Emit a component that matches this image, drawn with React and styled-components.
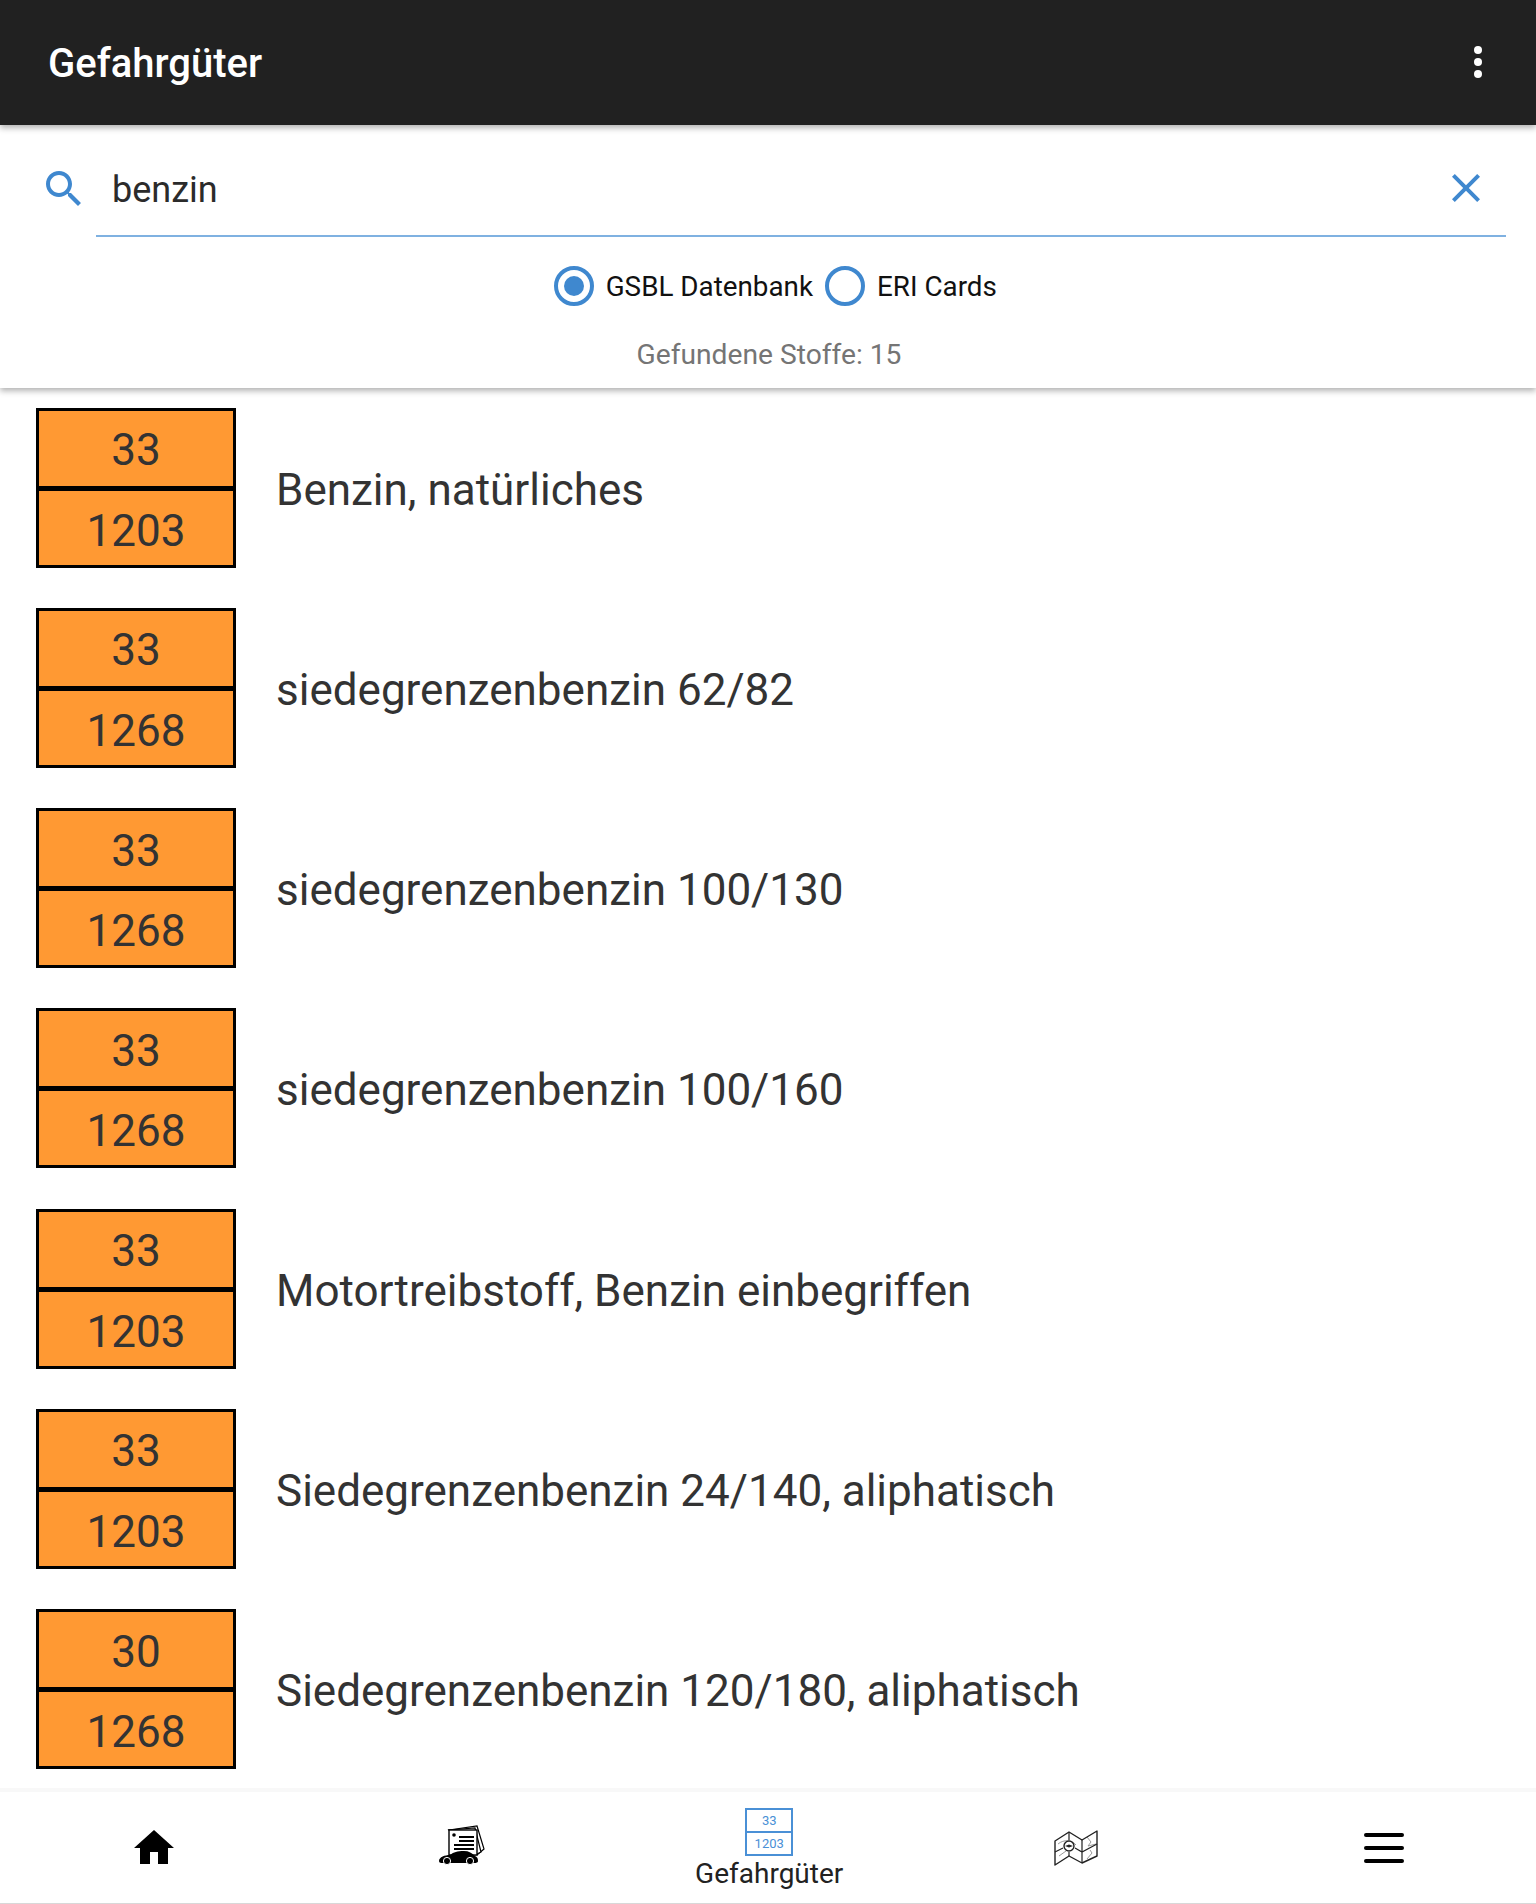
import styled, { createGlobalStyle } from "styled-components";

const GlobalStyle = createGlobalStyle`
  html, body {
    margin: 0;
    padding: 0;
    background: #fff;
    font-family: "Roboto", "Liberation Sans", sans-serif;
  }
`;

const Page = styled.div`
  width: 1536px;
  height: 1904px;
  display: flex;
  flex-direction: column;
  overflow: hidden;
  background: #fff;
`;

const Header = styled.header`
  height: 125px;
  flex: none;
  display: flex;
  align-items: center;
  justify-content: space-between;
  padding: 0 54px 0 48px;
  background: #212121;
  box-shadow: 0 3px 6px rgba(0, 0, 0, 0.3);
  position: relative;
  z-index: 3;
`;

const Title = styled.h1`
  margin: 0;
  padding-top: 2px;
  font-size: 40px;
  font-weight: 500;
  color: #fff;
`;

const MenuDots = styled.div`
  display: flex;
  flex-direction: column;
  gap: 4px;
  margin-bottom: 2px;
`;

const Dot = styled.span`
  width: 8px;
  height: 8px;
  border-radius: 50%;
  background: #fff;
`;

const SearchPanel = styled.section`
  flex: none;
  height: 263px;
  box-sizing: border-box;
  padding-top: 39px;
  background: #fff;
  box-shadow: 0 3px 6px rgba(0, 0, 0, 0.3);
  position: relative;
  z-index: 2;
`;

const SearchRow = styled.div`
  display: flex;
  align-items: flex-start;
  padding: 0 30px 0 40px;
`;

const SearchIcon = styled.svg`
  width: 48px;
  height: 48px;
  flex: none;
  margin: 1px 8px 0 0;
  fill: #3f88cf;
`;

const Field = styled.div`
  flex: 1;
  display: flex;
  align-items: center;
  justify-content: space-between;
  height: 48px;
  padding: 0 16px 23px 16px;
  border-bottom: 2px solid #7fb1e1;
`;

const Query = styled.span`
  padding-top: 4px;
  font-size: 36px;
  color: #2b2b2b;
`;

const ClearIcon = styled.svg`
  width: 48px;
  height: 48px;
  fill: #3f88cf;
`;

const RadioRow = styled.div`
  display: flex;
  justify-content: center;
  align-items: center;
  gap: 12px;
  margin-top: 29px;
  padding-left: 14.5px;
`;

const RadioOption = styled.label`
  display: flex;
  align-items: center;
  gap: 12px;
  font-size: 27.8px;
  color: #111;
`;

const RadioCircle = styled.span`
  width: 40px;
  height: 40px;
  box-sizing: border-box;
  border: 4px solid #3f88cf;
  border-radius: 50%;
  display: flex;
  align-items: center;
  justify-content: center;

  &::after {
    content: "";
    width: 20px;
    height: 20px;
    border-radius: 50%;
    background: ${(props) => (props.$checked ? "#3f88cf" : "transparent")};
  }
`;

const Count = styled.div`
  margin-top: 29px;
  padding-left: 2px;
  line-height: 40px;
  text-align: center;
  font-size: 28.2px;
  color: #757575;
`;

const List = styled.main`
  flex: 1;
  min-height: 0;
  overflow: hidden;
  padding-top: 19.5px;
`;

const Row = styled.div`
  display: flex;
  align-items: center;
  height: 160px;
  margin-bottom: 40.3px;
  padding-left: 36px;
`;

const Plate = styled.div`
  width: 200px;
  height: 160px;
  box-sizing: border-box;
  flex: none;
  display: flex;
  flex-direction: column;
  border: 3px solid #000;
  background: #ff9933;
`;

const PlateCell = styled.div`
  height: 75px;
  box-sizing: border-box;
  display: flex;
  align-items: center;
  justify-content: center;
  padding-top: 4px;
  font-size: 44px;
  color: #333;

  & + & {
    height: 79px;
    padding-top: 6px;
    border-top: 5px solid #000;
  }
`;

const ItemName = styled.div`
  margin-left: 40px;
  padding-top: 4px;
  font-size: 44px;
  color: #333;
`;

const BottomNav = styled.nav`
  flex: none;
  height: 112px;
  box-sizing: border-box;
  display: grid;
  grid-template-columns: repeat(4, 307.7px) 1fr;
  background: #fff;
  border-bottom: 1px solid #d8d8d8;
  box-shadow: 0 -4px 0 #f8f8f8;
  position: relative;
  z-index: 2;
`;

const NavItem = styled.div`
  display: flex;
  flex-direction: column;
  align-items: center;
  justify-content: center;
`;

const ActiveItem = styled(NavItem)`
  justify-content: flex-start;
  padding-top: 16px;
`;

const MiniPlate = styled.div`
  width: 48px;
  height: 48px;
  box-sizing: border-box;
  display: flex;
  flex-direction: column;
  border: 2px solid #4a90d6;
`;

const MiniCell = styled.div`
  flex: 1;
  display: flex;
  align-items: center;
  justify-content: center;
  font-size: 13px;
  color: #4a90d6;

  & + & {
    border-top: 2px solid #4a90d6;
  }
`;

const NavLabel = styled.div`
  margin-top: 2px;
  font-size: 28px;
  line-height: 32px;
  color: #222;
`;

const HomeIcon = styled.svg`
  width: 48px;
  height: 48px;
  fill: #000;
`;

const DocsIcon = styled.svg`
  width: 46px;
  height: 40px;
  margin-top: -6px;
`;

const MapIcon = styled.svg`
  width: 44px;
  height: 36px;
  margin-right: 2px;
`;

const BurgerIcon = styled.div`
  width: 40px;
  margin-left: 2px;
  display: flex;
  flex-direction: column;
  gap: 9px;
`;

const BurgerLine = styled.span`
  height: 4px;
  border-radius: 2px;
  background: #000;
`;

const items = [
  { top: "33", bottom: "1203", name: "Benzin, natürliches" },
  { top: "33", bottom: "1268", name: "siedegrenzenbenzin 62/82" },
  { top: "33", bottom: "1268", name: "siedegrenzenbenzin 100/130" },
  { top: "33", bottom: "1268", name: "siedegrenzenbenzin 100/160" },
  { top: "33", bottom: "1203", name: "Motortreibstoff, Benzin einbegriffen" },
  { top: "33", bottom: "1203", name: "Siedegrenzenbenzin 24/140, aliphatisch" },
  { top: "30", bottom: "1268", name: "Siedegrenzenbenzin 120/180, aliphatisch" },
];

export default function App() {
  return (
    <Page>
      <GlobalStyle />
      <Header>
        <Title>Gefahrgüter</Title>
        <MenuDots>
          <Dot />
          <Dot />
          <Dot />
        </MenuDots>
      </Header>

      <SearchPanel>
        <SearchRow>
          <SearchIcon viewBox="0 0 24 24">
            <path d="M15.5 14h-.79l-.28-.27C15.41 12.59 16 11.11 16 9.5 16 5.91 13.09 3 9.5 3S3 5.91 3 9.5 5.91 16 9.5 16c1.61 0 3.09-.59 4.23-1.57l.27.28v.79l5 4.99L20.49 19l-4.99-5zm-6 0C7.01 14 5 11.99 5 9.5S7.01 5 9.5 5 14 7.01 14 9.5 11.99 14 9.5 14z" />
          </SearchIcon>
          <Field>
            <Query>benzin</Query>
            <ClearIcon viewBox="0 0 24 24">
              <path d="M19 6.41L17.59 5 12 10.59 6.41 5 5 6.41 10.59 12 5 17.59 6.41 19 12 13.41 17.59 19 19 17.59 13.41 12z" />
            </ClearIcon>
          </Field>
        </SearchRow>
        <RadioRow>
          <RadioOption>
            <RadioCircle $checked />
            GSBL Datenbank
          </RadioOption>
          <RadioOption>
            <RadioCircle />
            ERI Cards
          </RadioOption>
        </RadioRow>
        <Count>Gefundene Stoffe: 15</Count>
      </SearchPanel>

      <List>
        {items.map((item) => (
          <Row key={item.name}>
            <Plate>
              <PlateCell>{item.top}</PlateCell>
              <PlateCell>{item.bottom}</PlateCell>
            </Plate>
            <ItemName>{item.name}</ItemName>
          </Row>
        ))}
      </List>

      <BottomNav>
        <NavItem>
          <HomeIcon viewBox="0 0 24 24">
            <path d="M10 20v-6h4v6h5v-8h3L12 3 2 12h3v8z" />
          </HomeIcon>
        </NavItem>
        <NavItem>
          <DocsIcon viewBox="0 0 46 40">
            <path d="M10 5 L38 1 L45 24 L38 30 Z" fill="#fff" stroke="#000" strokeWidth="1.2" />
            <path d="M10 5 L36 3 L42 27 L36 30 Z" fill="#fff" stroke="#000" strokeWidth="1.2" />
            <rect x="10" y="5" width="28" height="25" fill="#fff" stroke="#000" strokeWidth="1.4" />
            <circle cx="15" cy="10" r="1.8" fill="#000" />
            <path d="M20 12 H35 M20 16 H35 M15 20 H35 M15 24 H35" stroke="#000" strokeWidth="1.8" />
            <path d="M0 36 C0 32 6 30 11 30 C15 27 18 26 25 26 C30 26 33 28 36 31 C38 32 39 33 39 36 C39 38 36 38 35 38 L4 38 C2 38 0 38 0 36 Z" fill="#000" />
            <circle cx="8" cy="36" r="3.6" fill="#000" stroke="#fff" strokeWidth="1" />
            <circle cx="31" cy="36" r="3.6" fill="#000" stroke="#fff" strokeWidth="1" />
          </DocsIcon>
        </NavItem>
        <ActiveItem>
          <MiniPlate>
            <MiniCell>33</MiniCell>
            <MiniCell>1203</MiniCell>
          </MiniPlate>
          <NavLabel>Gefahrgüter</NavLabel>
        </ActiveItem>
        <NavItem>
          <MapIcon viewBox="0 0 44 36">
            <path d="M4 14 C10 9 18 10 22 15 M5 26 L12 21 M33 7 L37 12 L34 16 L42 14 M33 29 L38 23 L36 20" fill="none" stroke="#999" strokeWidth="1" />
            <path d="M1 11 L15 2 L28 10 L43 1 L43 26 L28 33 L15 26 L1 35 Z" fill="none" stroke="#222" strokeWidth="1.4" strokeLinejoin="round" />
            <path d="M28 10 V33 M15 2 V10 M15 22 V26 M1 22 L9 18 M21 18 L28 22 L43 14" fill="none" stroke="#222" strokeWidth="1.2" />
            <circle cx="15" cy="16" r="5" fill="#fff" stroke="#222" strokeWidth="1.4" />
            <path d="M11 16 L15 14.5 L19 16 L15 17.5 Z" fill="#222" />
          </MapIcon>
        </NavItem>
        <NavItem>
          <BurgerIcon>
            <BurgerLine />
            <BurgerLine />
            <BurgerLine />
          </BurgerIcon>
        </NavItem>
      </BottomNav>
    </Page>
  );
}
